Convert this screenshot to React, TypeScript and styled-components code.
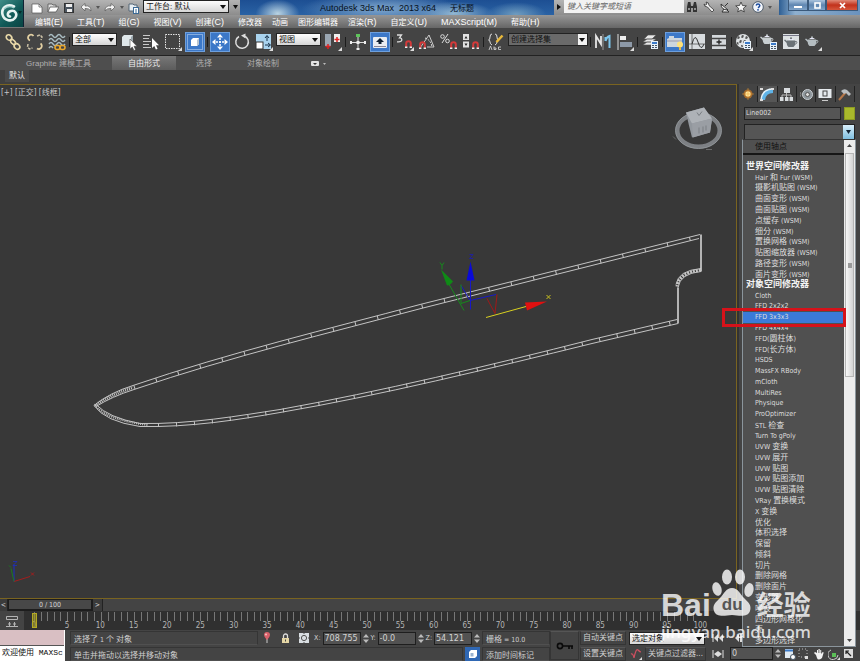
import React from "react";
import styled, { createGlobalStyle, css } from "styled-components";

const latin = `"DejaVu Sans Condensed", "Noto Sans", "Noto Sans CJK SC", sans-serif`;
const ui = `"Liberation Sans", "Noto Sans CJK SC", sans-serif`;

const Global = createGlobalStyle`
  * { box-sizing: border-box; }
  html, body, #root { height: 100%; margin: 0; }
  body { background: #444; overflow: hidden; font-family: ${ui}; font-size: 8px; color: #d6d6d6; }
  button, input, select { font: inherit; color: inherit; margin: 0; padding: 0; border: 0; border-radius: 0; background: none; }
  svg { display: block; flex: none; }
`;

/* ---------- text ---------- */
const Han = styled.span<{ $size: number }>`
  font-family: "Noto Sans CJK SC", sans-serif;
  font-size: ${(p) => p.$size}px;
`;

function Mixed({ text, han = 8 }: { text: string; han?: number }) {
  return (
    <>
      {text.split(/([\u4e00-\u9fff]+)/).map((part, i) =>
        i % 2 ? (
          <Han key={i} $size={han}>
            {part}
          </Han>
        ) : (
          part
        )
      )}
    </>
  );
}

/* ---------- shell ---------- */
const Shell = styled.div`
  position: relative;
  display: flex;
  flex-direction: column;
  height: 100vh;
  overflow: hidden;
`;

const Header = styled.header`
  display: flex;
  height: 28px;
  background: #777;
`;

const AppButton = styled.button`
  width: 24px;
  height: 27px;
  background: linear-gradient(135deg, #3f8d88, #115a58 55%, #0a4443);
  border-right: 1px solid #123;
`;

const HeaderRows = styled.div`
  flex: 1;
  display: flex;
  flex-direction: column;
  min-width: 0;
`;

const TitleBar = styled.div`
  display: flex;
  height: 15px;
  background: linear-gradient(#b4b4b4, #8c8c8c);
`;

const QuickAccess = styled.div`
  display: flex;
  align-items: center;
  padding-left: 5px;
`;

const PlainButton = styled.button<{ $w: number }>`
  display: flex;
  align-items: center;
  justify-content: center;
  width: ${(p) => p.$w}px;
  height: 14px;
`;

const Caption = styled.div`
  flex: 1;
  display: flex;
  gap: 14px;
  align-items: center;
  justify-content: center;
  font-size: 9px;
  line-height: 14px;
  color: #061020;
  white-space: pre;
  background:
    radial-gradient(ellipse 22px 14px at 12% 90%, #b9d3e2, transparent),
    radial-gradient(ellipse 80px 16px at 45% 60%, #7fa6cc, transparent),
    radial-gradient(ellipse 40px 12px at 68% 90%, #93b8d2, transparent),
    radial-gradient(ellipse 30px 12px at 88% 95%, #6f9cbf, transparent),
    linear-gradient(#1d4f93, #2a62a4);
`;

const SearchBox = styled.input`
  width: 120px;
  height: 13px;
  padding-left: 3px;
  background: #f2f2f2;
  color: #555;
  font-style: italic;
  font-size: 8px;
  &::placeholder { color: #666; opacity: 1; }
`;

const WindowButtons = styled.div`
  display: flex;
  width: 81px;
  padding-left: 9px;
  background: linear-gradient(90deg, #2e5f94, #8fb0cf 20%, #6a92bd);
`;

const WindowButton = styled.button<{ $w: number; $close?: boolean }>`
  display: flex;
  align-items: center;
  justify-content: center;
  width: ${(p) => p.$w}px;
  height: 11px;
  border: 1px solid #3b5a7c;
  border-top: 0;
  background: ${(p) =>
    p.$close ? "linear-gradient(#e08a78, #c2321c 50%, #d5563c)" : "linear-gradient(#a9c3dd, #5f86b1 50%, #7fa3c8)"};
`;

const MenuBar = styled.nav`
  flex: 1;
  display: flex;
  align-items: center;
  padding-left: 11px;
  background: linear-gradient(#969696, #666);
`;

const MenuItem = styled.button<{ $plain: boolean }>`
  margin-right: ${(p) => (p.$plain ? 10 : 14)}px;
  font-size: 9px;
  line-height: 12px;
  color: #fff;
  white-space: nowrap;
`;

/* ---------- toolbar ---------- */
const SelectWrap = styled.span<{ $w: number; $dark?: boolean }>`
  position: relative;
  display: inline-flex;
  width: ${(p) => p.$w}px;
  height: 13px;
  margin: 0 1px;
  border: 1px solid #222;
  background: ${(p) => (p.$dark ? "#6a6a6a" : "linear-gradient(#fdfdfd, #d6d6d6)")};
  color: #111;
  &::after {
    content: "";
    position: absolute;
    right: 0;
    top: 0;
    bottom: 0;
    width: 9px;
    background-color: ${(p) => (p.$dark ? "#f2f2f2" : "transparent")};
    background-image: linear-gradient(#111, #111);
    background-size: 0 0;
    pointer-events: none;
  }
  &::before {
    content: "";
    position: absolute;
    z-index: 1;
    right: 2px;
    top: 4px;
    border: solid transparent;
    border-width: 4px 3px 0;
    border-top-color: #111;
    pointer-events: none;
  }
`;

const Toolbar = styled.div`
  display: flex;
  align-items: center;
  height: 28px;
  padding-left: 2px;
  background: #444;
  border-bottom: 1px solid #222;
  ${SelectWrap} { margin-bottom: 4px; }
`;

const ToolButton = styled.button<{ $on?: boolean }>`
  display: flex;
  align-items: center;
  justify-content: center;
  width: 20px;
  height: 20px;
  margin: 0 1px;
  ${(p) =>
    p.$on &&
    css`
      background: #3c78c8;
      border: 1px solid #6d9fdd;
    `}
`;

const Separator = styled.i`
  width: 1px;
  height: 10px;
  margin: 0 1px;
  background: #1c1c1c;
`;

const NativeSelect = styled.select`
  appearance: none;
  width: 100%;
  padding-left: 2px;
  font-size: 8px;
  line-height: 11px;
  outline: 0;
`;

function Combo({ value, w, dark, label }: { value: string; w: number; dark?: boolean; label: string }) {
  return (
    <SelectWrap $w={w} $dark={dark}>
      <NativeSelect aria-label={label} defaultValue={value}>
        <option>{value}</option>
      </NativeSelect>
    </SelectWrap>
  );
}

/* ---------- ribbon ---------- */
const RibbonTabs = styled.div`
  display: flex;
  height: 14px;
  padding-left: 5px;
  background: #4e4e4e;
`;

const RibbonTab = styled.button<{ $on?: boolean; $w: number }>`
  width: ${(p) => p.$w}px;
  font-size: 8px;
  line-height: 13px;
  color: ${(p) => (p.$on ? "#eee" : "#b0b0b0")};
  background: ${(p) => (p.$on ? "linear-gradient(#777, #5c5c5c)" : "none")};
`;

const RibbonBody = styled.div`
  display: flex;
  height: 14px;
  padding-left: 5px;
  background: #3f3f3f;
`;

const RibbonPanel = styled.button`
  width: 24px;
  height: 12px;
  font-size: 8px;
  line-height: 12px;
  color: #e6e6e6;
  background: #4a4a4a;
`;

/* ---------- workspace ---------- */
const Workspace = styled.main`
  flex: 1;
  display: flex;
  min-height: 0;
`;

const Viewport = styled.section`
  position: relative;
  flex: 1;
  min-width: 0;
  background: #383838;
  border: solid #7a6420;
  border-width: 1px 1px 1px 0;
`;

const ViewLabel = styled.div`
  position: absolute;
  left: 1px;
  top: 2px;
  font: 8px/10px ${latin};
  color: #c8c8c8;
`;

const Scene = styled.svg`
  width: 100%;
  height: 100%;
`;

const CommandPanel = styled.aside`
  width: 123px;
  padding: 2px 5px 0 5px;
  background: #444;
  border-left: 2px solid #333;
`;

const PanelTabs = styled.div`
  display: grid;
  grid-template-columns: repeat(6, 1fr);
  height: 16px;
  margin: 0 0 5px -5px;
`;

const PanelTab = styled.button<{ $on?: boolean }>`
  display: flex;
  align-items: center;
  justify-content: center;
  border-right: 1px solid #222;
  background: ${(p) => (p.$on ? "#565656" : "none")};
`;

const NameRow = styled.div`
  display: flex;
  gap: 3px;
  height: 13px;
  margin-bottom: 4px;
`;

const NameInput = styled.input`
  flex: 1;
  min-width: 0;
  padding-left: 1px;
  font: 7px/11px ${latin};
  color: #ddd;
  background: #555;
  border: 1px solid #222;
`;

const Swatch = styled.button`
  width: 11px;
  background: #a9b92b;
  border: 1px solid #8d9b22;
`;

const ModifierCombo = styled.button`
  display: flex;
  justify-content: flex-end;
  width: 100%;
  height: 16px;
  background: #555;
  border: 1px solid #222;
`;

const ComboCap = styled.span`
  display: flex;
  align-items: center;
  justify-content: center;
  width: 11px;
  height: 14px;
  background: linear-gradient(#d8effa, #7fbfe0);
`;

const ModifierList = styled.div`
  position: absolute;
  top: 139px;
  right: 4px;
  bottom: 14px;
  width: 114px;
  display: flex;
  background: #505050;
  border: 1px solid #8b959c;
  border-top-color: #333;
`;

const ListBody = styled.div`
  flex: 1;
  display: flex;
  flex-direction: column;
`;

const PivotRow = styled.button`
  height: 15px;
  margin-bottom: 6px;
  padding-left: 12px;
  font-size: 8px;
  line-height: 10px;
  text-align: left;
  color: #111;
  border-bottom: 2px solid #161616;
`;

const Rows = styled.ul`
  flex: 1;
  display: grid;
  grid-auto-rows: 1fr;
  min-height: 0;
  margin: 0;
  padding: 0;
  list-style: none;
`;

const Row = styled.li<{ $head?: boolean; $on?: boolean }>`
  position: relative;
  display: flex;
  align-items: center;
  min-height: 0;
  height: 100%;
  padding-left: ${(p) => (p.$head ? 3 : 12)}px;
  font-family: ${latin};
  font-size: 7px;
  line-height: 10px;
  font-weight: ${(p) => (p.$head ? 700 : 400)};
  color: ${(p) => (p.$head ? "#f4f4f4" : "#dedede")};
  background: ${(p) => (p.$on ? "#3b7ad8" : "none")};
  white-space: pre;
`;

const Callout = styled.span`
  position: absolute;
  z-index: 2;
  left: -21px;
  right: -2px;
  top: -4px;
  bottom: -4px;
  border: 3px solid #d5121a;
`;

const ScrollTrack = styled.div`
  display: flex;
  flex-direction: column;
  justify-content: space-between;
  align-items: center;
  width: 11px;
  background: #ececec;
  padding: 4px 0;
`;

const Thumb = styled.span`
  display: flex;
  align-items: center;
  justify-content: center;
  width: 9px;
  height: 45%;
  margin: 6px 0 auto;
  border: 1px solid #b5b5b5;
  background: linear-gradient(90deg, #f7f7f7, #d4d4d4);
  &::after { content: ""; width: 4px; height: 5px; background: #999; }
`;

/* ---------- time line ---------- */
const TimeSlider = styled.div`
  display: flex;
  height: 12px;
  background: #444;
  font: 7px/11px ${latin};
`;

const StepButton = styled.button<{ $w: number }>`
  width: ${(p) => p.$w}px;
  background: #3b3b3b;
  border-right: 1px solid #222;
`;

const SliderHandle = styled.button`
  width: 85px;
  background: #484848;
  border: 1px solid #1d1d1d;
  border-width: 1px 2px 2px 1px;
  line-height: 8px;
`;

const TrackBar = styled.div`
  display: flex;
  height: 19px;
  background: #303030;
`;

const CurveToggle = styled.button`
  display: flex;
  align-items: center;
  justify-content: center;
  width: 24px;
  background: #444;
`;

const Ruler = styled.div`
  position: relative;
  flex: 1;
  padding-top: 1px;
`;

const Ticks = styled.div`
  display: grid;
  grid-template-columns: repeat(20, 1fr);
  height: 9px;
  margin: 0 160px 0 10px;
`;

const TickCell = styled.i`
  background: repeating-linear-gradient(90deg, #777 0 1px, transparent 1px 20%);
`;

const Labels = styled.div`
  display: grid;
  grid-template-columns: repeat(21, 1fr);
  margin: 0 143px 0 -7px;
  text-align: center;
  font: 8px/9px ${latin};
  color: #b5b5b5;
`;

const Playhead = styled.span`
  position: absolute;
  left: 8px;
  top: 2px;
  width: 5px;
  height: 15px;
  background: #a8a02099;
  border: 1px solid #b3aa24;
`;

/* ---------- status bar ---------- */
const StatusBar = styled.footer`
  display: flex;
  height: 31px;
  background: #444;
`;

const Listener = styled.div`
  width: 65px;
  border-right: 1px solid #fff;
`;

const ListenerLine = styled.div<{ $pink?: boolean }>`
  height: ${(p) => (p.$pink ? 16 : 15)}px;
  padding-left: 2px;
  overflow: hidden;
  white-space: nowrap;
  font: 8px/14px "Liberation Mono", "Noto Sans CJK SC", monospace;
  color: #111;
  background: ${(p) => (p.$pink ? "#d9bfc3" : "#fff")};
  border-bottom: ${(p) => (p.$pink ? "1px solid #555" : "0")};
`;

const StatusColumn = styled.div<{ $grow?: boolean; $w?: number }>`
  display: flex;
  flex-direction: column;
  gap: 1px;
  padding-top: 1px;
  min-width: 0;
  ${(p) => (p.$grow ? "flex: 1; padding-left: 5px;" : `width: ${p.$w}px;`)}
`;

const StatusLine = styled.div`
  display: flex;
  align-items: center;
  height: 15px;
  gap: 2px;
`;

const Readout = styled.div<{ $w?: number }>`
  ${(p) => (p.$w ? `width: ${p.$w}px;` : "flex: 1;")}
  height: 14px;
  padding-left: 3px;
  font: 7px/13px ${latin};
  color: #cfcfcf;
  white-space: pre;
  border: 1px solid #353535;
  border-bottom-color: #505050;
`;

const CoordLabel = styled.label`
  display: flex;
  align-items: center;
  gap: 2px;
  font: 7px/12px ${latin};
`;

const NumberInput = styled.input<{ $w: number }>`
  width: ${(p) => p.$w}px;
  height: 13px;
  padding-left: 1px;
  font: 8px/11px "DejaVu Sans", sans-serif;
  color: #d2d2d2;
  background: #525252;
  border: 1px solid #1e1e1e;
`;

const StatusButton = styled.button<{ $w: number; $h?: number }>`
  display: flex;
  align-items: center;
  justify-content: center;
  width: ${(p) => p.$w}px;
  height: ${(p) => p.$h ?? 14}px;
  font: 8px/12px ${latin};
  color: #d0d0d0;
  white-space: nowrap;
  border: 1px solid #353535;
  border-top-color: #555;
`;

const IconButton = styled.button<{ $w: number; $on?: boolean }>`
  display: flex;
  align-items: center;
  justify-content: center;
  width: ${(p) => p.$w}px;
  height: 14px;
  background: ${(p) => (p.$on ? "#2f67b3" : "none")};
`;

/* ---------- watermark ---------- */
const Watermark = styled.div`
  position: absolute;
  right: 47px;
  bottom: 18px;
  width: 152px;
  color: #ffffffcc;
  pointer-events: none;
`;

const Brand = styled.div`
  display: flex;
  align-items: flex-end;
  height: 48px;
  font: 700 32px/24px "Liberation Sans", sans-serif;
`;

const Paw = styled.span`
  position: relative;
  width: 43px;
  height: 48px;
`;

const PawText = styled.span`
  position: absolute;
  left: 11px;
  top: 26px;
  font: 700 17px/20px "Liberation Sans", sans-serif;
  color: #555;
`;

const BrandHan = styled.span`
  margin-left: 3px;
  font: 700 27px/27px "Noto Sans CJK SC", sans-serif;
`;

const Site = styled.div`
  margin-top: 4px;
  font: 500 17px/22px "Noto Sans", sans-serif;
  white-space: nowrap;
`;

/* ---------- icons ---------- */
const Svg = ({ s = 18, w, children }: { s?: number; w?: number; children: React.ReactNode }) => (
  <svg width={w ?? s} height={s} viewBox={`0 0 ${w ?? s} ${s}`} fill="none" aria-hidden="true">
    {children}
  </svg>
);

const Corner = () => <path d="M18 14v4h-4z" fill="#ddd" />;
const Magnet = ({ x = 9, y = 8 }: { x?: number; y?: number }) => (
  <g transform={`translate(${x} ${y})`}>
    <path d="M1.200 7V3.500a2.300 2.300 0 0 1 4.600 0V7" stroke="#d43a3a" strokeWidth="2" />
    <path d="M0 7.200h2.400M4.600 7.200H7" stroke="#eee" strokeWidth="1.400" />
  </g>
);
const Teapot = ({ x = 0, y = 0, c = "#c9cfd2" }: { x?: number; y?: number; c?: string }) => (
  <g transform={`translate(${x} ${y})`}>
    <path d="M3 3.500h8c1 2.500 0 5-1.500 6.500h-5C3.500 9 2.600 7.500 2.700 6L0 3.200l1-.7 2 1.500z" fill={c} />
    <path d="M11 4.500c2.500-.8 2.800 1.800-.8 3.500" stroke={c} />
    <path d="M4 3q3-2.500 6 0z" fill="#eef" />
    <circle cx="7" cy="1.200" r="1" fill={c} />
  </g>
);
const Dialog = ({ x, y }: { x: number; y: number }) => (
  <g transform={`translate(${x} ${y})`}>
    <rect width="7" height="8" fill="#e8f1f8" />
    <rect x="1" y="1" width="5" height="2" fill="#3b7ac8" />
    <path d="M1 4.500h2M1 6.500h2M4 4.500h2M4 6.500h2" stroke="#456" />
  </g>
);

const icons: Record<string, React.ReactNode> = {
  link: (
    <Svg>
      <g stroke="#e8d8a8" strokeWidth="1.700">
        <ellipse cx="5" cy="4.500" rx="3" ry="2.500" transform="rotate(45 5 4.500)" />
        <ellipse cx="9" cy="9" rx="3" ry="1.800" transform="rotate(45 9 9)" />
        <ellipse cx="13" cy="13.500" rx="3" ry="2.500" transform="rotate(45 13 13.500)" />
      </g>
    </Svg>
  ),
  unlink: (
    <Svg>
      <g stroke="#e2cfa2" strokeWidth="1.800">
        <path d="M7.500 3A3 3 0 1 0 4 7.500M11 15.500a3 3 0 1 0 3.500-5" />
        <path d="M11 3l3-1 2 2-1 3M2 11l-.5 3 2 2 3-1" stroke="#c9bfa5" strokeWidth="1.500" strokeDasharray="3 1" />
      </g>
    </Svg>
  ),
  bind: (
    <Svg>
      <path d="M1 3q2-3 4 0t4 0 4 0 4 0M1 7q2-3 4 0t4 0 4 0 4 0M1 11q2-3 4 0t4 0 4 0 4 0M1 15q2-3 4 0" stroke="#a9bcc2" strokeWidth="1.400" />
      <rect x="7" y="12.500" width="5" height="4" rx="2" stroke="#e8a72e" strokeWidth="1.600" />
      <rect x="12" y="12.500" width="5" height="4" rx="2" stroke="#e8a72e" strokeWidth="1.600" />
    </Svg>
  ),
  pick: (
    <Svg>
      <path d="M2 4l2-2h9v9l-2 2H2z" fill="#dfe7ea" />
      <path d="M11 4l2-2v9l-2 2z" fill="#9aa6ac" />
      <path d="M10 6v10l2.300-2 1.600 3.500 1.700-.8-1.600-3.400H17z" fill="#fff" stroke="#444" strokeWidth=".6" />
    </Svg>
  ),
  byName: (
    <Svg>
      <path d="M1 2.500h7M1 5.500h6M1 8.500h8M1 11.500h6M1 14.500h8" stroke="#c9c9c9" />
      <path d="M10 5v10l2.300-2 1.600 3.500 1.700-.8-1.600-3.400H17z" fill="#fff" />
    </Svg>
  ),
  region: (
    <Svg>
      <rect x="1.500" y="1.500" width="14" height="14" stroke="#e5e5e5" strokeDasharray="1.500 1" />
      <Corner />
    </Svg>
  ),
  crossing: (
    <Svg>
      <rect x="1.500" y="1.500" width="15" height="15" stroke="#cfe0f5" strokeDasharray="1 1" />
      <path d="M5 7l2-2h6v6l-2 2H5z" fill="#fff" />
      <path d="M11 7v6l2-2V5z" fill="#b9c6d2" />
    </Svg>
  ),
  move: (
    <Svg>
      <path d="M9 1l3 3.500H6zM9 17l3-3.500H6zM1 9l3.500-3v6zM17 9l-3.500-3v6z" fill="#fff" />
      <path d="M9 5v8M5 9h8" stroke="#fff" strokeDasharray="2 1" strokeWidth="1.500" />
    </Svg>
  ),
  rotate: (
    <Svg>
      <path d="M6 3.500A6.300 6.300 0 1 0 11 3" stroke="#dcdcdc" strokeWidth="1.500" />
      <path d="M12.500.5v5L8 2.500z" fill="#dcdcdc" />
    </Svg>
  ),
  scale: (
    <Svg>
      <path d="M1 1h15v15H1z" fill="#a9d3ee" />
      <rect x="1" y="9" width="7" height="7" fill="#fff" stroke="#333" />
      <path d="M12 8V3M10 5l2-2.500L14 5M10 12h5M13 10l2.500 2-2.500 2" stroke="#18324a" />
      <Corner />
    </Svg>
  ),
  pivot: (
    <Svg>
      <rect x="1" y="1" width="6" height="12" fill="#9aa6b2" />
      <rect x="10" y="1" width="6" height="8" fill="#eee" />
      <path d="M4 11v5M1.500 13.500h5M13 4v5M10.500 6.500h5" stroke="#d22" strokeWidth="1.500" />
      <Corner />
    </Svg>
  ),
  manipulate: (
    <Svg>
      <path d="M9 3v13M2 9.500h14" stroke="#ddd" />
      <path d="M7 1h4v3H7z" fill="#5ec45a" />
      <path d="M7.500 8h3v3h-3zM1 8h2v3H1zM15 8h2v3h-2zM7.500 15h3v2h-3z" fill="#eee" />
    </Svg>
  ),
  keyboard: (
    <Svg>
      <rect x="2" y="4" width="14" height="11" rx="1" fill="#e9edf2" />
      <path d="M9 5l4 4h-2.500v2h-3V9H5z" fill="#123" />
      <path d="M3 13.500h12" stroke="#889" />
    </Svg>
  ),
  snap: (
    <Svg>
      <path d="M1 2h4.500L3.500 4.800q2.500 0 2.300 2.200T1 8.800" stroke="#ddd" strokeWidth="1.300" />
      <Magnet x={9} y={7} />
      <Corner />
    </Svg>
  ),
  angle: (
    <Svg>
      <path d="M2 15L11 2l5 12H9" stroke="#ccc" />
      <path d="M7 5q6 2 7 9" stroke="#ddd" strokeDasharray="2 1" />
      <Magnet x={1} y={8} />
    </Svg>
  ),
  percent: (
    <Svg>
      <path d="M8 1L2 10" stroke="#ddd" />
      <circle cx="2.500" cy="3.500" r="1.800" stroke="#ddd" />
      <circle cx="7.500" cy="8" r="1.800" stroke="#ddd" />
      <Magnet x={10} y={8} />
    </Svg>
  ),
  spinner: (
    <Svg>
      <path d="M1 1h6v6H1zM1 8.500h6v6H1z" fill="#e2e2e2" />
      <path d="M2.500 5.500L4 3l1.500 2.500zM2.500 10.500L4 13l1.500-2.500z" fill="#222" />
      <Magnet x={10} y={8} />
    </Svg>
  ),
  sets: (
    <Svg>
      <path d="M5 1Q3 1 3 4T1.500 7Q3 7 3 9t2 3M8 1q2 0 2 3t1.500 3Q10 7 10 9t-2 3" stroke="#ddd" />
      <path d="M15.500 2.500L9.500 9" stroke="#e9b93b" strokeWidth="2.500" />
      <path d="M2 17l1.500-4L5 17M7 13.500v3h2v-1.500H7M14 14h-2.500v2.500H14" stroke="#ccc" strokeWidth=".9" />
    </Svg>
  ),
  mirror: (
    <Svg>
      <path d="M2 15V3l5 8V3" stroke="#e6e6e6" strokeWidth="1.800" />
      <path d="M9 1v16" stroke="#999" />
      <path d="M11.500 8q1-4 4-5v12M11.500 8v-4" stroke="#7cc5ec" strokeWidth="2" />
    </Svg>
  ),
  align: (
    <Svg>
      <path d="M2 1v16" stroke="#ddd" />
      <rect x="4" y="3" width="6" height="4" fill="#eee" />
      <rect x="4" y="9" width="12" height="5" fill="#8d99a8" />
      <Corner />
    </Svg>
  ),
  layers: (
    <Svg>
      <path d="M2 12l4-3h9l-4 3zM2 9l4-3h9l-4 3zM3 6l4-4h8l-4 4z" fill="#e8e8e8" stroke="#555" strokeWidth=".6" />
      <Dialog x={10} y={8} />
    </Svg>
  ),
  ribbon: (
    <Svg>
      <path d="M1 6l2-1V3h5v2h8v9H1z" fill="#cdd6de" />
      <path d="M1 8h15" stroke="#99a" />
      <circle cx="14" cy="11.500" r="3" fill="#ffe27a" />
      <path d="M13 14h2v3h-2z" fill="#e5b84a" />
    </Svg>
  ),
  curve: (
    <Svg>
      <rect x="1" y="1" width="16" height="15" fill="#d8dcdf" />
      <path d="M4 1v15M1 11h16" stroke="#555" strokeWidth=".8" />
      <path d="M4 11q3-12 6-2t6 2" stroke="#333" />
    </Svg>
  ),
  schematic: (
    <Svg>
      <rect x="2" y="2" width="14" height="14" fill="#d4d8db" />
      <path d="M2 5.500h14M2 12.500h14" stroke="#444" strokeWidth="1.500" />
      <path d="M9 6.500v5M6.500 9h5" stroke="#222" strokeWidth="1.300" />
    </Svg>
  ),
  material: (
    <Svg>
      <circle cx="8" cy="8" r="7" fill="#dfe3e5" />
      <path d="M3 3l2 1-1 2-2-.5zM7 2l2 .5L8 5 6 4.500zM11 3l2 1-1 2-2-.5zM5 7l2 .5L6 10l-2-.5zM9 7l2 .5L10 10l-2-.5zM2 9l1.500.5v2.500L2 11zM6 12l2 .5V14l-2-.5z" fill="#555" />
      <Dialog x={9} y={8} />
      <Corner />
    </Svg>
  ),
  renderSetup: (
    <Svg>
      <Teapot x={0} y={1} />
      <Dialog x={10} y={9} />
    </Svg>
  ),
  frame: (
    <Svg>
      <rect x="1" y="1" width="16" height="15" fill="#dde1e3" />
      <path d="M1 2.500h16" stroke="#778" />
      <Teapot x={2} y={4} c="#6b7276" />
    </Svg>
  ),
  render: (
    <Svg>
      <Teapot x={1} y={3} c="#b5bdc1" />
      <Corner />
    </Svg>
  ),
};

const toolbar: (string | { v: string; w: number; dark?: boolean; l: string })[] = [
  "link", "unlink", "bind", "|", { v: "全部", w: 45, l: "选择过滤器" }, "pick", "byName", "region", "crossing*", "|",
  "move*", "rotate", "scale", { v: "视图", w: 45, l: "参考坐标系" }, "pivot", "|", "manipulate", "keyboard*", "|",
  "snap", "angle", "percent", "spinner", "|", "sets", { v: "创建选择集", w: 80, dark: true, l: "命名选择集" }, "|",
  "mirror", "align", "|", "layers", "|", "ribbon*", "curve", "schematic", "|", "material", "|",
  "renderSetup", "frame", "render",
];

const menus = ["编辑(E)", "工具(T)", "组(G)", "视图(V)", "创建(C)", "修改器", "动画", "图形编辑器", "渲染(R)", "自定义(U)", "MAXScript(M)", "帮助(H)"];

const modifiers = [
  "#世界空间修改器", "Hair 和 Fur (WSM)", "摄影机贴图 (WSM)", "曲面变形 (WSM)", "曲面贴图 (WSM)", "点缓存 (WSM)", "细分 (WSM)",
  "置换网格 (WSM)", "贴图缩放器 (WSM)", "路径变形 (WSM)", "面片变形 (WSM)", "#对象空间修改器", "Cloth", "FFD 2x2x2", "FFD 3x3x3",
  "FFD 4x4x4", "FFD(圆柱体)", "FFD(长方体)", "HSDS", "MassFX RBody", "mCloth", "MultiRes", "Physique", "ProOptimizer", "STL 检查",
  "Turn To gPoly", "UVW 变换", "UVW 展开", "UVW 贴图", "UVW 贴图添加", "UVW 贴图清除", "VRay 置换模式", "X 变换", "优化", "体积选择",
  "保留", "倾斜", "切片", "删除网格", "删除面片", "变形器", "噪波", "四边形网格化", "壳", "多边形选择",
];

const Caret = ({ c = "#333" }: { c?: string }) => (
  <Svg s={4} w={5}>
    <path d="M0 0h5L2.500 4z" fill={c} />
  </Svg>
);

const Spin = () => (
  <Svg s={11} w={6}>
    <path d="M0 4.500L3 1l3 3.500zM0 6.500L3 10l3-3.500z" fill="#bbb" />
  </Svg>
);

function TopBar() {
  return (
    <Header>
      <AppButton aria-label="应用程序">
        <Svg s={27} w={23}>
          <path d="M14 6.500C7 3 1 8 2.500 14.500S12 22 15 18s0-8-4-7-4 5-1 5.500" stroke="#e6f2f1" strokeWidth="2.600" strokeLinecap="round" />
          <path d="M4 9q5-4.500 10-1" stroke="#9fd0cc" strokeWidth="1.500" />
          <path d="M18 11h4l-2 3z" fill="#062c2b" />
        </Svg>
      </AppButton>
      <HeaderRows>
        <TitleBar>
          <QuickAccess>
            <PlainButton $w={16} aria-label="新建">
              <Svg s={12}><path d="M1 2h7l3 3v6H1z" fill="#fff" stroke="#555" strokeWidth=".7" /><path d="M8 2v3h3" stroke="#555" strokeWidth=".7" /></Svg>
            </PlainButton>
            <PlainButton $w={16} aria-label="打开">
              <Svg s={12}><path d="M1 10V2h4l1 1h3v2" stroke="#555" fill="#ddd" strokeWidth=".8" /><path d="M1 10l2-5h9l-3 5z" fill="#fff" stroke="#555" strokeWidth=".8" /></Svg>
            </PlainButton>
            <PlainButton $w={16} aria-label="保存">
              <Svg s={12}><rect x="1.500" y="1.500" width="9" height="9" fill="#4b5560" stroke="#333" /><path d="M3 2h6v3H3zM4 7h5v3H4z" fill="#eee" /></Svg>
            </PlainButton>
            <PlainButton $w={17} aria-label="撤消">
              <Svg s={12}><path d="M1 5l4-3.500V4q6-1 6 5-2-3-6-2.500V9z" fill="#f4f4f4" stroke="#555" strokeWidth=".7" /></Svg>
            </PlainButton>
            <PlainButton $w={7} aria-label="撤消列表"><Svg s={3} w={4}><path d="M0 0h4L2 3z" fill="#555" /></Svg></PlainButton>
            <PlainButton $w={17} aria-label="重做">
              <Svg s={12}><path d="M11 5L7 1.500V4Q1 3 1 9q2-3 6-2.500V9z" fill="#f4f4f4" stroke="#555" strokeWidth=".7" /></Svg>
            </PlainButton>
            <PlainButton $w={7} aria-label="重做列表"><Svg s={3} w={4}><path d="M0 0h4L2 3z" fill="#555" /></Svg></PlainButton>
            <PlainButton $w={17} aria-label="项目文件夹">
              <Svg s={12}><path d="M1 9V2h4l1 1h3v6z" fill="#e8eef3" stroke="#567" /><rect x="5.500" y="5.500" width="5" height="6" fill="#fff" stroke="#3c6a95" /><path d="M7 8h2M7 10h2" stroke="#3c6a95" /></Svg>
            </PlainButton>
          </QuickAccess>
          <Combo value="工作台: 默认" w={86} label="工作台" />
          <PlainButton $w={10} aria-label="自定义快速访问工具栏"><Caret c="#111" /></PlainButton>
          <Caption>
            <span>Autodesk 3ds Max  2013 x64</span>
            <Mixed text="无标题" />
          </Caption>
          <PlainButton $w={10} aria-label="展开搜索"><Svg s={6} w={4}><path d="M0 0v6l4-3z" fill="#111" /></Svg></PlainButton>
          <SearchBox aria-label="搜索" placeholder="键入关键字或短语" />
          <PlainButton $w={16} aria-label="查找">
            <Svg s={12}><path d="M2 1h2.500l.5 4v6H1V6zM8 1h2l1 5v5H7V5z" fill="#333" /><path d="M5 5h2v2H5z" fill="#333" /><path d="M2 8h2M8 8h2" stroke="#eee" /></Svg>
          </PlainButton>
          <PlainButton $w={17} aria-label="速博中心">
            <Svg s={12}><path d="M1 3q0 3 3.500 3L9 11l2-2-5-4.500Q6 1 3 1l1 2-1.500 1z" fill="#f4f4f4" stroke="#333" strokeWidth=".8" /></Svg>
          </PlainButton>
          <PlainButton $w={16} aria-label="通讯中心">
            <Svg s={12}><path d="M2 3q0 6 7 6L2 3zM5 8l-2 3h7L8 9M6 5l3-3" stroke="#333" fill="#f4f4f4" /></Svg>
          </PlainButton>
          <PlainButton $w={16} aria-label="收藏夹">
            <Svg s={12}><path d="M6 1l1.500 3.500 3.800.3-2.900 2.500.9 3.700L6 9l-3.300 2 .9-3.700L.7 4.800l3.800-.3z" fill="#f6f6f6" stroke="#333" strokeWidth=".8" /></Svg>
          </PlainButton>
          <PlainButton $w={30} aria-label="帮助">
            <Svg s={12} w={24}><circle cx="6" cy="6" r="5.300" fill="#f3f6fb" stroke="#345" strokeWidth=".8" /><path d="M4.200 4.500Q4.500 3 6 3t1.800 1.500Q7.800 5.500 6 6.800" stroke="#1e4da0" strokeWidth="1.500" /><circle cx="6" cy="8.800" r=".9" fill="#1e4da0" /><path d="M16 5h4l-2 3z" fill="#555" /></Svg>
          </PlainButton>
          <WindowButtons>
            <WindowButton $w={20} aria-label="最小化"><Svg s={7} w={8}><path d="M0 4h8v2H0z" fill="#fff" /></Svg></WindowButton>
            <WindowButton $w={18} aria-label="还原"><Svg s={7} w={7}><rect x="1" y="1" width="5" height="5" stroke="#fff" strokeWidth="1.600" /></Svg></WindowButton>
            <WindowButton $w={32} $close aria-label="关闭"><Svg s={7} w={7}><path d="M1 1l5 5M6 1L1 6" stroke="#fff" strokeWidth="1.700" /></Svg></WindowButton>
          </WindowButtons>
        </TitleBar>
        <MenuBar>
          {menus.map((m) => (
            <MenuItem key={m} $plain={!m.includes("(")}><Mixed text={m} /></MenuItem>
          ))}
        </MenuBar>
      </HeaderRows>
    </Header>
  );
}

function SceneView() {
  const topEdge = "M94 405Q110 392 133 385C230 352 330 328 420 304L700 234";
  const topInner = "M96 406Q112 396 134 389C231 356 331 332 421 308L699 238";
  const lowEdge = "M94 405Q105 421 140 426C190 427 240 419 280 412C380 395 490 368 592 343L678 323";
  const lowInner = "M96 404Q108 417 140 423C190 424 240 415 280 409C380 391 490 365 592 339L677 319";
  return (
    <Scene viewBox="0 85 736 512" fill="none" role="img" aria-label="线框视图">
      <g stroke="#d4d4d4" strokeWidth=".9">
        <path d={topEdge} />
        <path d={topInner} />
        <path d={lowEdge} />
        <path d={lowInner} />
        <path d="M701 234V271M678 287V323" strokeWidth="2" stroke="#b4b4b4" />
        <path d="M701 271Q680 273 678 287M701 268Q678 270 676 284" />
      </g>
      <g stroke="#c4c4c4" strokeWidth="4">
        <path d="M134 387C231 354 331 330 421 306L700 236" strokeDasharray="1 22" />
        <path d="M158 424.500C200 424.500 240 417 280 410.500C380 393 490 366.500 592 341L678 321" strokeDasharray="1 17" />
        <path d="M95 405Q111 394 133 387" strokeDasharray="1 1" strokeWidth="3" />
        <path d="M95 405Q106 419 148 424.500" strokeDasharray="1 1" strokeWidth="2" />
        <path d="M701 269.500Q679 272 677 286" strokeDasharray="2 1" strokeWidth="3" />
      </g>
      <g strokeWidth="1">
        <path d="M470.500 309V278M461 285l9 15 26-6" stroke="#1818c8" />
        <path d="M466.500 280l4-19 4 19z" fill="#0a0ad8" />
        <path d="M469.500 254h3.500l-3.500 4h3.500" stroke="#1c1cb8" strokeWidth=".8" />
        <path d="M464 310l-16-28M461 284v19l9-3" stroke="#168a1c" />
        <path d="M441 269l12 12q-3 4-6 4z" fill="#0f8a16" />
        <path d="M440 262l2 3 2-3M442 265v4" stroke="#168a1c" />
        <path d="M486 317l40-11" stroke="#d8d020" />
        <path d="M487 298l8 15 2-19" stroke="#a01818" />
        <path d="M525 302l22-1-20 9z" fill="#e01010" />
        <path d="M546.500 294.500l4 4M550.500 294.500l-4 4" stroke="#c8c020" />
      </g>
      <g>
        <ellipse cx="698.500" cy="130" rx="21" ry="16" stroke="#7d8084" strokeWidth="4" />
        <ellipse cx="698.500" cy="130" rx="23" ry="18" stroke="#9b9fa3" strokeWidth=".8" />
        <path d="M686 112l18-5 8 12-2 13-18 5-3-12z" fill="#92979d" />
        <path d="M686 112l18-5 8 11-20 5z" fill="#aeb2b7" />
        <path d="M692 123l20-5-2 14-17 5z" fill="#9a9ea4" />
        <path d="M697 112l2 3 3-4M699 127v6M703 126v6M706 125v5" stroke="#7a7e83" />
        <path d="M673 136l3 3M706 149h6" stroke="#6a6a6a" />
      </g>
      <g>
        <path d="M14 581V564" stroke="#1d2fc0" />
        <path d="M13 561h4l-4 4h4" stroke="#1d2fc0" strokeWidth=".8" />
        <path d="M14 581l16-5M31 572l3 3M34 572l-3 3" stroke="#a31d1d" />
        <path d="M14 581l-3-13M9 565l2 2" stroke="#1b7a20" />
      </g>
    </Scene>
  );
}

function Panel() {
  return (
    <CommandPanel>
      <PanelTabs>
        <PanelTab aria-label="创建"><Svg s={12}><circle cx="6" cy="6" r="4.500" fill="#e8861c" opacity=".6" /><circle cx="6" cy="6" r="2.700" fill="#ffe69a" /><path d="M6 0v12M0 6h12" stroke="#f0a030" strokeWidth=".5" /></Svg></PanelTab>
        <PanelTab $on aria-label="修改"><Svg s={14}><path d="M1 13Q2 2 13 2v4Q6 6 5 13z" fill="#5fb4e8" /><path d="M1 13Q2 2 13 2" stroke="#e5f3fb" strokeWidth="1.300" /><path d="M0 1h3v2H0zM11 1h3v2h-3zM0 12h3v2H0z" fill="#ddd" /></Svg></PanelTab>
        <PanelTab aria-label="层次"><Svg s={13}><path d="M4 0h6v5H4zM0 9h3.500v4H0zM5 9h3.500v4H5zM9.500 9H13v4H9.500z" fill="#d8dcdf" /><path d="M6.500 5v4M2 9V7h9v2" stroke="#bbb" /></Svg></PanelTab>
        <PanelTab aria-label="运动"><Svg s={13}><circle cx="7.500" cy="6.500" r="5" fill="#8d959b" stroke="#c9ced2" /><circle cx="7.500" cy="6.500" r="2" fill="#ddd" stroke="#555" /><path d="M0 4q2 2 0 5" stroke="#888" /></Svg></PanelTab>
        <PanelTab aria-label="显示"><Svg s={13} w={14}><rect x=".5" y="1" width="13" height="9" fill="#e6eaed" /><path d="M4 12h6v1H4z" fill="#ccc" /><rect x="5" y="3" width="4" height="5" stroke="#444" /></Svg></PanelTab>
        <PanelTab aria-label="实用程序"><Svg s={13}><path d="M8 4L1 12" stroke="#b3764a" strokeWidth="2" /><path d="M3 3q3-3 6-1l4 4-2 2-3-3-2 1z" fill="#b9bec2" /></Svg></PanelTab>
      </PanelTabs>
      <NameRow>
        <NameInput aria-label="对象名称" defaultValue="Line002" />
        <Swatch aria-label="对象颜色" />
      </NameRow>
      <ModifierCombo aria-label="修改器列表" aria-expanded="true">
        <ComboCap><Caret c="#123" /></ComboCap>
      </ModifierCombo>
    </CommandPanel>
  );
}

function Modifiers() {
  return (
    <ModifierList>
      <ListBody>
        <PivotRow>使用轴点</PivotRow>
        <Rows>
          {modifiers.map((m) => {
            const head = m.startsWith("#");
            const on = m === "FFD 3x3x3";
            return (
              <Row key={m} $head={head} $on={on}>
                <span><Mixed text={head ? m.slice(1) : m} han={head ? 9 : 8} /></span>
                {on && <Callout />}
              </Row>
            );
          })}
        </Rows>
      </ListBody>
      <ScrollTrack>
        <Svg s={3} w={5}><path d="M0 3h5L2.500 0z" fill="#444" /></Svg>
        <Thumb />
        <Svg s={3} w={5}><path d="M0 0h5L2.500 3z" fill="#444" /></Svg>
      </ScrollTrack>
    </ModifierList>
  );
}

function Status() {
  return (
    <StatusBar>
      <Listener>
        <ListenerLine $pink />
        <ListenerLine>欢迎使用 MAXSc</ListenerLine>
      </Listener>
      <StatusColumn $grow>
        <StatusLine>
          <Readout><Mixed text="选择了 1 个 对象" /></Readout>
          <IconButton $w={14} aria-label="孤立"><Svg s={12} w={8}><path d="M4 11V6" stroke="#ccc" /><path d="M1 3a3 3 0 0 1 6 0Q7 5 4 8 1 5 1 3z" fill="#d8606a" /><circle cx="3" cy="2.500" r="1" fill="#f6c0c0" /></Svg></IconButton>
          <IconButton $w={18} aria-label="锁定选择"><Svg s={11} w={9}><path d="M2.500 5V3a2 2 0 0 1 4 0v2" stroke="#ddd" strokeWidth="1.300" /><rect x="1" y="5" width="7" height="5" fill="#e6d7a6" /><path d="M4.500 6.500v2" stroke="#444" /></Svg></IconButton>
          <IconButton $w={16} aria-label="绝对模式"><Svg s={10}><rect width="10" height="10" fill="#d9dee2" /><circle cx="5" cy="5" r="2.600" stroke="#555" /><path d="M5 0v3M5 7v3M0 5h3M7 5h3" stroke="#555" strokeDasharray="1 1" /></Svg></IconButton>
          <CoordLabel>X:<NumberInput $w={38} defaultValue="708.755" /><Spin /></CoordLabel>
          <CoordLabel>Y:<NumberInput $w={38} defaultValue="-0.0" /><Spin /></CoordLabel>
          <CoordLabel>Z:<NumberInput $w={38} defaultValue="54.121" /><Spin /></CoordLabel>
          <Readout $w={68}><Mixed text="栅格 = 10.0" /></Readout>
        </StatusLine>
        <StatusLine>
          <Readout><Mixed text="单击并拖动以选择并移动对象" /></Readout>
          <IconButton $w={15} $on aria-label="时间标记"><Svg s={11}><path d="M2 4l2-2h6v6l-2 2H2z" fill="#fff" /><path d="M3.500 5h3v3.500h-3z" fill="#9ab3d0" /></Svg></IconButton>
          <Readout $w={68}><Mixed text="添加时间标记" /></Readout>
        </StatusLine>
      </StatusColumn>
      <StatusColumn $w={30}>
        <StatusButton $w={29} $h={29} aria-label="设置关键点">
          <Svg s={10} w={18}><circle cx="4" cy="5" r="2.600" stroke="#0a0a0a" strokeWidth="1.600" /><path d="M7 5h10M13 5v3M16 5v3" stroke="#0a0a0a" strokeWidth="1.600" /></Svg>
        </StatusButton>
      </StatusColumn>
      <StatusColumn $w={128}>
        <StatusLine>
          <StatusButton $w={46}>自动关键点</StatusButton>
          <Combo value="选定对象" w={76} label="选定对象" />
        </StatusLine>
        <StatusLine>
          <StatusButton $w={46}>设置关键点</StatusButton>
          <IconButton $w={15} aria-label="切线"><Svg s={12}><path d="M1 6q2-1 3 4 2-10 4-8t3 2" stroke="#d05060" strokeWidth="1.200" /><path d="M9 12h3V9z" fill="#ddd" /></Svg></IconButton>
          <StatusButton $w={61}>关键点过滤器...</StatusButton>
        </StatusLine>
      </StatusColumn>
      <StatusColumn $w={152}>
        <StatusLine>
          <IconButton $w={20} aria-label="转至开头"><Svg s={8} w={12}><path d="M1 0v8" stroke="#ddd" /><path d="M6 0v8L2 4zM11 0v8L7 4z" fill="#ddd" /></Svg></IconButton>
          <IconButton $w={20} aria-label="上一帧"><Svg s={8} w={12}><path d="M5 0v8L1 4z" fill="#ddd" /><path d="M7 0v8M10 0v8" stroke="#ddd" strokeWidth="2" /></Svg></IconButton>
        </StatusLine>
        <StatusLine>
          <IconButton $w={20} aria-label="关键点模式"><Svg s={8} w={12}><path d="M1 0v8M11 0v8" stroke="#ddd" /><path d="M6 1v6L2 4zM6 1v6l4-3z" fill="#ddd" /></Svg></IconButton>
          <NumberInput $w={43} aria-label="当前帧" defaultValue="0" />
          <Spin />
          <IconButton $w={13} aria-label="时间配置"><Svg s={12}><rect x="1" y="1" width="8" height="9" fill="#dfe9f2" /><path d="M1 2.500h8" stroke="#3b7ac8" strokeWidth="2" /><circle cx="9" cy="9" r="2.500" fill="#fff" stroke="#456" /></Svg></IconButton>
          <IconButton $w={11} aria-label="缩放区域"><Svg s={11}><rect x="1" y="1" width="8" height="8" stroke="#bbb" strokeDasharray="1 2" /><path d="M7 8h3v3H7z" fill="#ddd" /></Svg></IconButton>
          <IconButton $w={15} aria-label="平移"><Svg s={12}><path d="M3 7L1 5l1-1 2 1V2h1v3h.500V1h1.200v4h.500V2h1v4l1.500-2 1 .5L9 10q-4 3-5 0z" fill="#f2f2f2" /></Svg></IconButton>
          <IconButton $w={12} aria-label="环绕"><Svg s={12}><path d="M3 2a5 5 0 1 0 7 5" stroke="#ccc" /><path d="M4 5h4v4H4z" fill="#5bbf57" /><path d="M12 9v3H9z" fill="#ddd" /></Svg></IconButton>
          <IconButton $w={12} aria-label="最大化视口"><Svg s={11}><rect x="1" y="1" width="9" height="9" fill="#dcdcdc" /><path d="M3 3l5 5M3 6V3h3" stroke="#222" strokeWidth="1.200" /></Svg></IconButton>
        </StatusLine>
      </StatusColumn>
    </StatusBar>
  );
}

export default function App() {
  return (
    <Shell>
      <Global />
      <TopBar />
      <Toolbar>
        {toolbar.map((t, i) => {
          if (typeof t !== "string") return <Combo key={i} value={t.v} w={t.w} dark={t.dark} label={t.l} />;
          if (t === "|") return <Separator key={i} />;
          const name = t.replace("*", "");
          return (
            <ToolButton key={i} $on={t.endsWith("*")} aria-label={name}>
              {icons[name]}
            </ToolButton>
          );
        })}
      </Toolbar>
      <RibbonTabs>
        <RibbonTab $w={107}><Mixed text="Graphite 建模工具" /></RibbonTab>
        <RibbonTab $w={64} $on>自由形式</RibbonTab>
        <RibbonTab $w={56}>选择</RibbonTab>
        <RibbonTab $w={62}>对象绘制</RibbonTab>
        <RibbonTab $w={50} aria-label="最小化功能区">
          <Svg s={7} w={50}><rect x="17" y="1" width="8" height="5" rx="1" fill="#e2e2e2" /><path d="M19 3h4l-2 2z" fill="#333" /><path d="M29 3h3l-1.500 2z" fill="#bbb" /></Svg>
        </RibbonTab>
      </RibbonTabs>
      <RibbonBody>
        <RibbonPanel>默认</RibbonPanel>
      </RibbonBody>
      <Workspace>
        <Viewport>
          <SceneView />
          <ViewLabel><Mixed text="[+] [正交] [线框]" /></ViewLabel>
        </Viewport>
        <Panel />
      </Workspace>
      <TimeSlider>
        <StepButton $w={8} aria-label="上一帧">&lt;</StepButton>
        <SliderHandle>0 / 100</SliderHandle>
        <StepButton $w={10} aria-label="下一帧">&gt;</StepButton>
      </TimeSlider>
      <TrackBar>
        <CurveToggle aria-label="迷你曲线编辑器">
          <Svg s={14} w={14}><path d="M1.500 2.500h11v3h-11zM4.500 8v4M9.500 8v4M1 12.500h12M3 10h3M8 10h3" stroke="#b4b4b4" /></Svg>
        </CurveToggle>
        <Ruler>
          <Ticks>{Array.from({ length: 20 }, (_, i) => <TickCell key={i} />)}</Ticks>
          <Labels>{Array.from({ length: 21 }, (_, i) => <span key={i}>{i * 5}</span>)}</Labels>
          <Playhead />
        </Ruler>
      </TrackBar>
      <Status />
      <Modifiers />
      <Watermark>
        <Brand>
          <span>Bai</span>
          <Paw>
            <Svg s={48} w={43}>
              <g fill="#fff" fillOpacity=".8">
                <ellipse cx="16" cy="8" rx="5" ry="7.500" />
                <ellipse cx="29" cy="8" rx="5" ry="7.500" />
                <ellipse cx="6" cy="20" rx="4.500" ry="7" transform="rotate(-15 6 20)" />
                <ellipse cx="38" cy="21" rx="4.500" ry="7" transform="rotate(12 38 21)" />
                <path d="M21 19c6 0 8 6 12 10s8 7 6 13-9 5-18 4c-9 1-16 2-18-4s2-9 6-13 6-10 12-10z" />
              </g>
            </Svg>
            <PawText>du</PawText>
          </Paw>
          <BrandHan>经验</BrandHan>
        </Brand>
        <Site>jingyan.baidu.com</Site>
      </Watermark>
    </Shell>
  );
}
